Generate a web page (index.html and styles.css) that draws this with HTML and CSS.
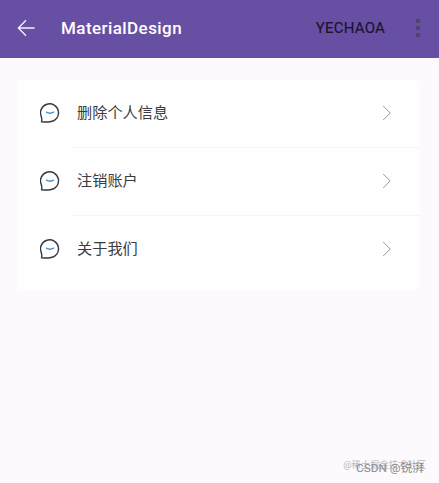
FILE: index.html
```
<!DOCTYPE html>
<html lang="zh-CN">
<head>
    <meta charset="UTF-8">
    <title>MaterialDesign</title>
    <link rel="stylesheet" href="styles.css">
</head>
<body>

<svg class="defs" width="0" height="0">
    <symbol id="chat" viewBox="0 0 20 20">
        <path d="M1.5 18.7C2.2 17.3 1.8 15.6 1.3 13.5A9 9 0 1 1 10 18.8C7.2 19.3 4.4 19 1.5 18.7Z" fill="none" stroke="#37393c" stroke-width="1.4" stroke-linejoin="round"/>
        <path d="M6.5 9.2Q10 11.2 13.5 9.2" fill="none" stroke="#3d8fd3" stroke-width="1.4" stroke-linecap="round"/>
    </symbol>
    <symbol id="next" viewBox="0 0 10 16">
        <path d="M1.2 1L8.2 8L1.2 15" fill="none" stroke="#999b9f" stroke-width="1"/>
    </symbol>
</svg>

<div class="toolbar">
    <svg class="back" viewBox="0 0 18 18">
        <path d="M17.6 9H1.4M9 1.3L1.4 9L9 16.7" fill="none" stroke="#f4edfb" stroke-width="1.4"/>
    </svg>
    <h1 class="title">MaterialDesign</h1>
    <span class="action">YECHAOA</span>
    <div class="more"><i></i><i></i><i></i></div>
</div>

<div class="card">
    <div class="row">
        <svg class="icon"><use href="#chat"/></svg>
        <div class="cell"><span>删除个人信息</span><svg class="arrow"><use href="#next"/></svg></div>
    </div>
    <div class="row">
        <svg class="icon"><use href="#chat"/></svg>
        <div class="cell"><span>注销账户</span><svg class="arrow"><use href="#next"/></svg></div>
    </div>
    <div class="row">
        <svg class="icon"><use href="#chat"/></svg>
        <div class="cell"><span>关于我们</span><svg class="arrow"><use href="#next"/></svg></div>
    </div>
</div>

<div class="mark mark-site">@稀土掘金技术社区</div>
<div class="mark mark-author">CSDN @锐湃</div>

</body>
</html>
```

FILE: styles.css
```
body {
    margin: 0;
    height: 483px;
    overflow: hidden;
    position: relative;
    background: #fdfafe;
    font-family: Roboto, "Noto Sans CJK SC", sans-serif;
}
.defs {
    position: absolute;
}
.toolbar {
    display: flex;
    align-items: center;
    box-sizing: border-box;
    height: 58px;
    padding: 0 19px 3px 17px;
    background: #6750a4;
}
.back {
    width: 18px;
    height: 18px;
}
.title {
    flex: 1;
    margin: 0 0 0 26px;
    font-size: 17px;
    font-weight: 500;
    letter-spacing: 0.43px;
    color: #fff;
}
.action {
    font-size: 15px;
    font-weight: 400;
    letter-spacing: 0.2px;
    color: #1d1430;
    -webkit-text-stroke: 0.2px #1d1430;
}
.more {
    display: flex;
    flex-direction: column;
    gap: 3px;
    margin-left: 31px;
}
.more i {
    width: 4px;
    height: 4px;
    background: #51446d;
}
.card {
    margin: 22px 19px 0 17px;
    padding-bottom: 6px;
    border-radius: 5px;
    background: #fefeff;
}
.row {
    display: flex;
    align-items: center;
    height: 68px;
    padding-left: 23px;
}
.icon {
    width: 20px;
    height: 20px;
    margin: 0 12px 2px 0;
}
.cell {
    display: flex;
    flex: 1;
    align-items: center;
    justify-content: space-between;
    box-sizing: border-box;
    height: 68px;
    padding: 0 28px 2px 5px;
    border-bottom: 1px solid #f4f4f6;
    font-size: 15.2px;
    color: #3a3b3e;
}
.cell span {
    padding-bottom: 3px;
}
.row:last-child .cell {
    border-bottom-color: transparent;
}
.arrow {
    width: 10px;
    height: 16px;
}
.mark {
    position: absolute;
    white-space: nowrap;
}
.mark-site {
    right: 13px;
    bottom: 11px;
    font-size: 9.3px;
    line-height: 14px;
    color: #b9b7bb;
}
.mark-author {
    right: 15px;
    bottom: 7px;
    font-size: 11.8px;
    line-height: 16px;
    color: #8b898d;
}
```
